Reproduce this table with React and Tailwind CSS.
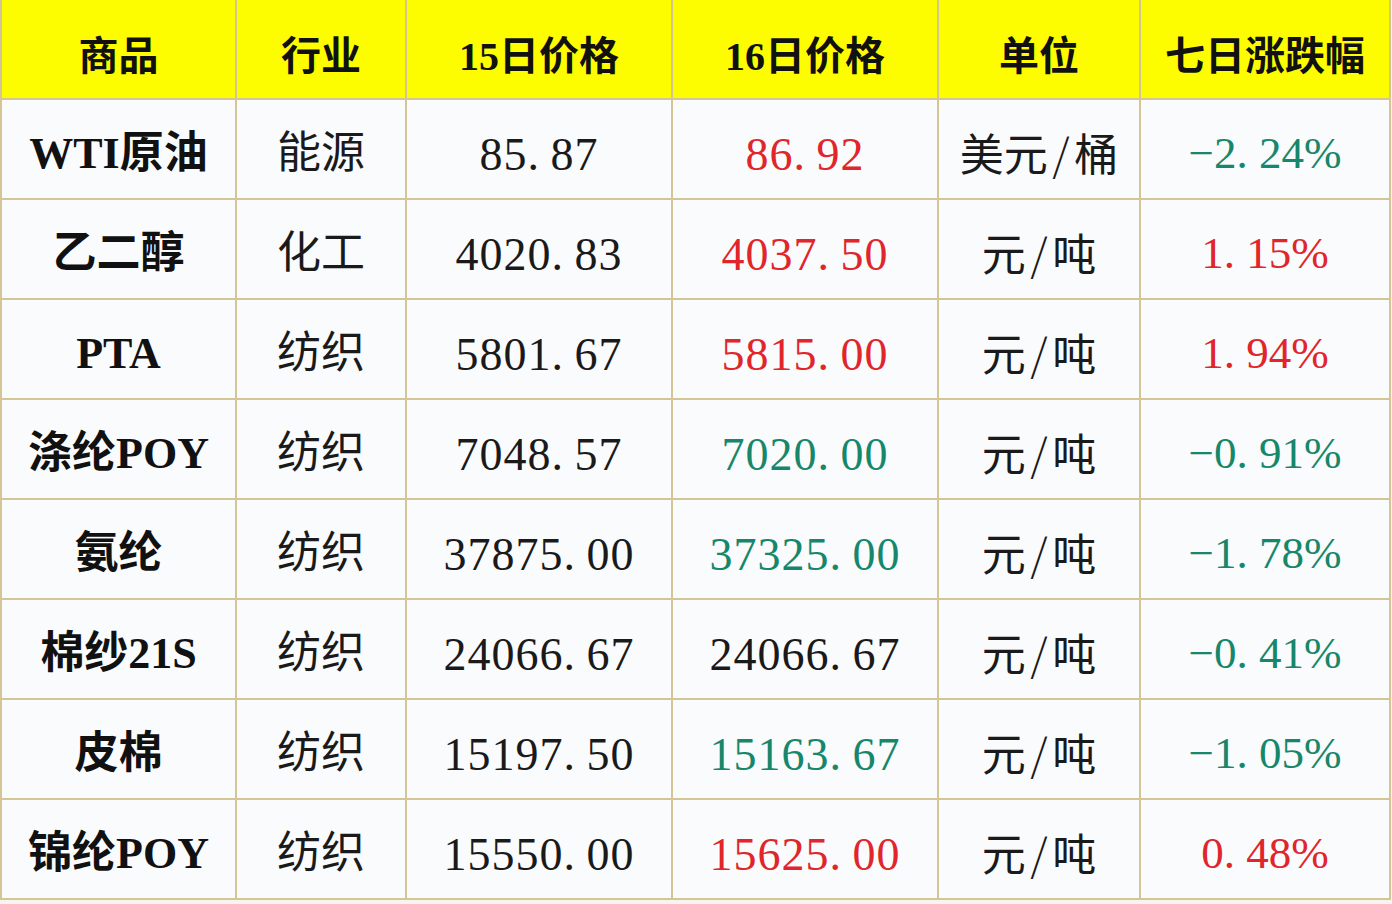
import React from "react";

const R = "text-[#e0252b]";
const G = "text-[#16876a]";
const K = "text-[#1a1a1a]";

const rows = [
  ["WTI原油", "能源", "85.87", ["86.92", R], "美元/桶", ["-2.24%", G]],
  ["乙二醇", "化工", "4020.83", ["4037.50", R], "元/吨", ["1.15%", R]],
  ["PTA", "纺织", "5801.67", ["5815.00", R], "元/吨", ["1.94%", R]],
  ["涤纶POY", "纺织", "7048.57", ["7020.00", G], "元/吨", ["-0.91%", G]],
  ["氨纶", "纺织", "37875.00", ["37325.00", G], "元/吨", ["-1.78%", G]],
  ["棉纱21S", "纺织", "24066.67", ["24066.67", K], "元/吨", ["-0.41%", G]],
  ["皮棉", "纺织", "15197.50", ["15163.67", G], "元/吨", ["-1.05%", G]],
  ["锦纶POY", "纺织", "15550.00", ["15625.00", R], "元/吨", ["0.48%", R]],
];

const headers = ["商品", "行业", "15日价格", "16日价格", "单位", "七日涨跌幅"];

function Num({ v }) {
  const parts = v.split(".");
  return (
    <span className="whitespace-pre">
      {parts[0].replace("-", "\u2212")}
      {parts.length > 1 && (
        <>
          <span className="inline-block w-[0.5em] text-left">.</span>
          {parts[1]}
        </>
      )}
    </span>
  );
}

function Unit({ v }) {
  const [a, b] = v.split("/");
  return (
    <span className="font-['Noto_Sans_CJK_SC'] leading-none">
      {a}
      <span className="inline-block w-[0.6em] text-center font-light">/</span>
      {b}
    </span>
  );
}

const cell =
  "h-[100px] flex items-center justify-center border-r-2 border-b-2 border-[#d3c596]";

export default function App() {
  return (
    <div className="w-[1392px] h-[904px] bg-[#f7f5ee] overflow-hidden">
      <div
        className="grid grid-cols-[235px_170px_266px_266px_202px_250px] w-[1389px] border-l-2 border-[#d3c596]"
        style={{ fontFamily: '"Liberation Serif", "Noto Sans CJK SC", serif' }}
      >
        {headers.map((h) => (
          <div
            key={h}
            className={`${cell} pt-[16px] bg-[#fdfd00] text-[40px] font-bold text-[#111]`}
          >
            {h}
          </div>
        ))}
        {rows.map((r, i) => (
          <React.Fragment key={i}>
            <div className={`${cell} pt-[10px] bg-[#fafbfd] text-[44px] font-bold text-[#111]`}>
              {r[0]}
            </div>
            <div className={`${cell} pt-[10px] bg-[#fafbfd] text-[44px] text-[#1a1a1a]`}>
              {r[1]}
            </div>
            <div className={`${cell} pt-[10px] bg-[#fafbfd] text-[46px] text-[#1a1a1a] tracking-[1px]`}>
              <Num v={r[2]} />
            </div>
            <div className={`${cell} pt-[10px] bg-[#fafbfd] text-[46px] ${r[3][1]} tracking-[1px]`}>
              <Num v={r[3][0]} />
            </div>
            <div className={`${cell} pt-[6px] bg-[#fafbfd] text-[44px] text-[#1a1a1a]`}>
              <Unit v={r[4]} />
            </div>
            <div className={`${cell} pt-[10px] bg-[#fafbfd] text-[45px] ${r[5][1]}`}>
              <Num v={r[5][0]} />
            </div>
          </React.Fragment>
        ))}
      </div>
    </div>
  );
}
